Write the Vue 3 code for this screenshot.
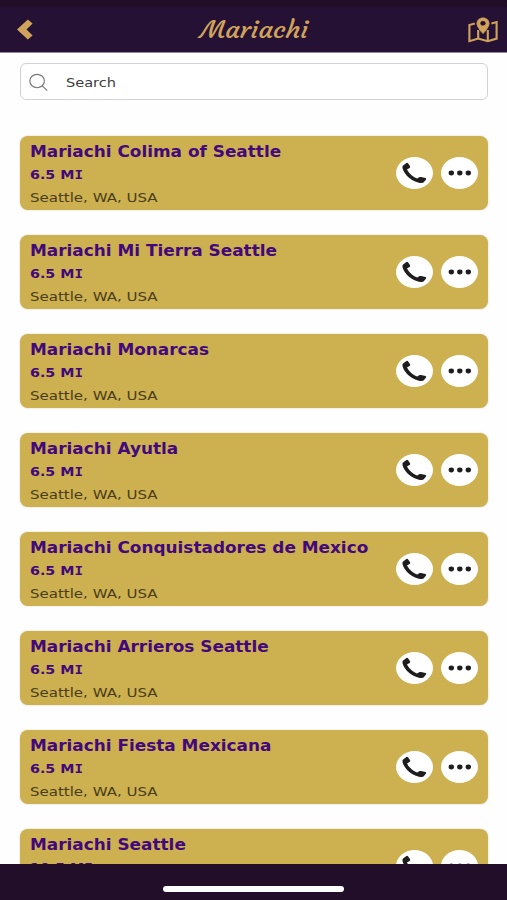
<template>
  <div class="screen">
    <header class="topbar">
      <button class="icon-btn" aria-label="Back">
        <svg width="16" height="20" viewBox="0 0 16 20">
          <path d="M0 9.5 L10.8 -.5 L15.6 3.5 L9.5 9.5 L15.6 15.5 L10.8 19.5 Z" fill="#d0a35c" />
        </svg>
      </button>
      <h1 class="heading">Mariachi</h1>
      <button class="icon-btn" aria-label="Map">
        <svg width="30" height="26" viewBox="0 0 30 26" fill="none" stroke="#d0a35c" stroke-width="2.1">
          <path d="M6.8 6.4 L1.4 8 V24.2 L10.2 21.6 L19.8 24.2 L28.6 21.6 V5 L23.4 6.4" />
          <path d="M10.2 13 V21.6 M19.8 13 V24" />
          <path d="M15 1 C11.4 1 9 3.4 9 6.6 C9 10.4 15 16.6 15 16.6 C15 16.6 21 10.4 21 6.6 C21 3.4 18.6 1 15 1 Z" fill="#d0a35c" stroke-width="1" />
          <ellipse cx="15" cy="6.3" rx="2.6" ry="2.3" fill="#241132" stroke="none" />
        </svg>
      </button>
    </header>

    <main class="content">
      <label class="search">
        <svg width="19" height="18" viewBox="0 0 19 18" fill="none" stroke="#777" stroke-width="1.15">
          <ellipse cx="8.1" cy="8" rx="7.3" ry="6.7" />
          <path d="M13.2 12.8 L18.2 17.6" />
        </svg>
        <input v-model="query" type="text" placeholder="Search" />
      </label>

      <ul class="list">
        <li v-for="band in filteredBands" :key="band.name" class="card">
          <div class="info">
            <h2 class="name">{{ band.name }}</h2>
            <p class="distance">{{ band.miles }} M<span class="slab">I</span></p>
            <p class="city">Seattle, WA, USA</p>
          </div>
          <button class="round" aria-label="Call">
            <svg width="25" height="22" viewBox="0 0 25 22" fill="#1d1d1d">
              <path d="M2.4 5.5 C3.8 12 11.5 18.6 19.5 19.2" fill="none" stroke="#1d1d1d" stroke-width="3.6" />
              <path d="M.8 3.7 L4.4 .9 Q5.4 .4 6 1.3 L8.1 4.2 Q8.5 5.2 7.6 5.9 L4.4 7.8 L1.6 8.4 Q-.2 4.8 .8 3.7 Z" />
              <path d="M14.4 17.4 L17 15.2 Q17.9 14.7 19 15 L23.5 15.9 Q24.8 16.5 24 17.6 L21.8 20.2 Q20.4 21.5 16.5 20.3 Z" />
            </svg>
          </button>
          <button class="round" aria-label="More">
            <svg width="24" height="6" viewBox="0 0 24 6" fill="#1d1d1d">
              <ellipse cx="3.3" cy="3" rx="2.7" ry="2.4" />
              <ellipse cx="11.8" cy="3" rx="2.7" ry="2.4" />
              <ellipse cx="20.3" cy="3" rx="2.7" ry="2.4" />
            </svg>
          </button>
        </li>
      </ul>
    </main>

    <footer class="bottombar">
      <span class="home-indicator"></span>
    </footer>
  </div>
</template>

<script setup>
import { ref, computed } from 'vue';

const query = ref('');

const bands = [
  { name: 'Mariachi Colima of Seattle', miles: '6.5' },
  { name: 'Mariachi Mi Tierra Seattle', miles: '6.5' },
  { name: 'Mariachi Monarcas', miles: '6.5' },
  { name: 'Mariachi Ayutla', miles: '6.5' },
  { name: 'Mariachi Conquistadores de Mexico', miles: '6.5' },
  { name: 'Mariachi Arrieros Seattle', miles: '6.5' },
  { name: 'Mariachi Fiesta Mexicana', miles: '6.5' },
  { name: 'Mariachi Seattle', miles: '10.5' },
];

const filteredBands = computed(() => {
  const q = query.value.trim().toLowerCase();
  return bands.filter((band) => band.name.toLowerCase().includes(q));
});
</script>

<style>
body {
  margin: 0;
  background: #fefefe;
}
</style>

<style scoped>
.screen {
  display: flex;
  flex-direction: column;
  height: 900px;
  overflow: hidden;
  background: #fefefe;
  font-family: Verdana, 'DejaVu Sans', sans-serif;
}

button {
  display: flex;
  align-items: center;
  justify-content: center;
  padding: 0;
  border: 0;
  background: none;
}

svg {
  overflow: visible;
}

.topbar {
  display: flex;
  flex: none;
  justify-content: space-between;
  box-sizing: border-box;
  height: 53px;
  padding: 7px 9px 0 17px;
  border-bottom: 1px solid #8f8799;
  background: linear-gradient(#220d27 0, #220d27 6px, #241133 8px);
}

.icon-btn {
  height: 45px;
}

.heading {
  margin: 0 0 0 7px;
  color: #d0a35c;
  font: 23px/46px Courgette, Lato, sans-serif;
  transform: scaleX(1.17);
}

.content {
  flex: 1;
  min-height: 0;
  overflow: hidden;
  padding: 10px 19px 0 20px;
}

.search {
  display: flex;
  align-items: center;
  box-sizing: border-box;
  height: 37px;
  padding: 0 8px;
  border: 1px solid #d2d2d2;
  border-radius: 6px;
  background: #fff;
}

.search input {
  flex: 1;
  margin: 1px 0 0 18px;
  padding: 0;
  border: 0;
  outline: 0;
  background: none;
  color: #3c3c3c;
  font: 13px 'DejaVu Sans', sans-serif;
  transform: scaleX(1.12);
  transform-origin: left;
}

.search input::placeholder {
  color: #3c3c3c;
  opacity: 1;
}

.list {
  display: flex;
  flex-direction: column;
  gap: 25.3px;
  margin: 36.4px 0 0;
  padding: 0;
  list-style: none;
}

.card {
  display: flex;
  flex: none;
  align-items: center;
  box-sizing: border-box;
  height: 73.7px;
  padding: 0 10px;
  border-radius: 8px;
  background: #cdb04f;
  box-shadow: 0 0 2px rgba(130, 110, 50, .35);
}

.info {
  flex: 1;
  align-self: flex-start;
  padding-top: 4px;
  white-space: nowrap;
}

.name,
.distance,
.city {
  width: max-content;
  margin: 0;
  transform-origin: left;
}

.name {
  color: #42087c;
  font-size: 15px;
  line-height: 24px;
  transform: scaleX(1.126);
}

.distance {
  color: #42087c;
  font-size: 12.5px;
  font-weight: bold;
  line-height: 22px;
  transform: scaleX(1.14);
}

.slab {
  font-family: 'DejaVu Sans Mono', monospace;
}

.city {
  color: #4a3d1c;
  font-size: 12.5px;
  line-height: 23px;
  transform: scaleX(1.2);
}

.round {
  width: 37px;
  height: 32px;
  border-radius: 50%;
  background: #fff;
}

.round + .round {
  margin-left: 8px;
}

.bottombar {
  display: flex;
  flex: none;
  justify-content: center;
  height: 36px;
  background: #220e28;
}

.home-indicator {
  width: 181px;
  height: 6px;
  margin-top: 22px;
  border-radius: 3px;
  background: #fff;
}
</style>
